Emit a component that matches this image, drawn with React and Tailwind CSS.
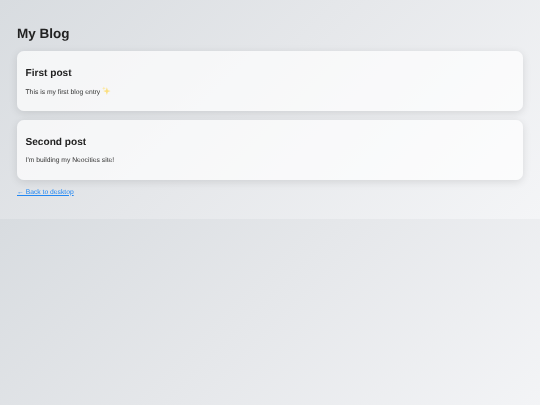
export default function App() {
  return (
    <div className="min-h-[405px] bg-[linear-gradient(135deg,#d8dce0_0%,#e5e7ea_45%,#f4f5f7_100%)] bg-[length:100%_219px] font-['Liberation_Sans',Arial,sans-serif] text-[#222] [text-rendering:geometricPrecision]">
      <div className="flex h-[219px] flex-col px-[17px] pt-[24.5px] blur-[0.25px]">
        <h1 className="text-[13.5px] leading-[18px] font-bold text-[#222]">My Blog</h1>
        <div className="mt-[8.5px] flex flex-col gap-[9px]">
          <Card title="First post">
            This is my first blog entry
            <svg className="ml-[2px] inline-block align-[-1px]" width="9" height="9" viewBox="0 0 24 24">
              <path d="M13 3 L15.5 11 L23 13.5 L15.5 16 L13 24 L10.5 16 L3 13.5 L10.5 11 Z" fill="#fbdf80" />
              <path d="M5 1 L6.2 4.8 L10 6 L6.2 7.2 L5 11 L3.8 7.2 L0 6 L3.8 4.8 Z" fill="#fde79f" />
            </svg>
          </Card>
          <Card title="Second post">I'm building my Neocities site!</Card>
        </div>
        <a href="#" className="mt-[7.5px] text-[6.75px] leading-[9px] text-[#2287f2] underline">← Back to desktop</a>
      </div>
    </div>
  );
}

function Card({ title, children }) {
  return (
    <div className="flex h-[60px] flex-col rounded-[7px] bg-white/70 px-[8.5px] pt-[16px] shadow-[0_2px_9px_rgba(0,0,0,0.11)]">
      <h2 className="text-[10.125px] leading-[14px] font-bold text-[#222]">{title}</h2>
      <p className="mt-[5px] text-[6.75px] leading-[12px] text-[#333]">{children}</p>
    </div>
  );
}
